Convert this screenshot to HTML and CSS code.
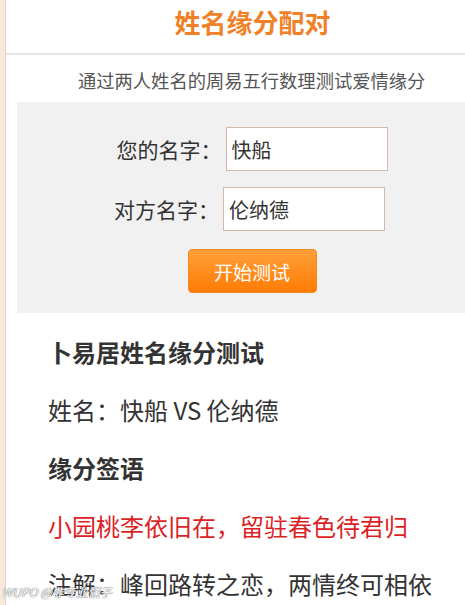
FILE: index.html
```html
<!DOCTYPE html>
<html lang="zh-CN">
<head>
  <meta charset="UTF-8" />
  <meta name="viewport" content="width=device-width, initial-scale=1.0"/>
  <title>姓名缘分配对</title>
  <link rel="stylesheet" href="styles.css">
</head>
<body>
  <div class="page">
    <div class="side-strip"></div>

    <div class="main">
      <div class="header">
        <h1 class="title">姓名缘分配对</h1>
      </div>

      <p class="intro">通过两人姓名的周易五行数理测试爱情缘分</p>

      <div class="test-form">
        <div class="form-row">
          <label for="myName">您的名字：</label>
          <input type="text" id="myName" value="快船" />
        </div>
        <div class="form-row row-shift">
          <label for="otherName">对方名字：</label>
          <input type="text" id="otherName" value="伦纳德" />
        </div>
        <button class="start-btn">开始测试</button>
      </div>

      <div class="result">
        <h2 class="result-title">卜易居姓名缘分测试</h2>
        <p>姓名：快船 VS 伦纳德</p>
        <h2 class="result-title">缘分签语</h2>
        <p class="sign">小园桃李依旧在，留驻春色待君归</p>
        <p>注解：峰回路转之恋，两情终可相依</p>
      </div>
    </div>
  </div>

  <div class="watermark">WUPO @非专业懂子</div>
</body>
</html>
```

FILE: styles.css
```css
body {
  margin: 0;
  font-family: "Noto Sans CJK SC", "Noto Sans", sans-serif;
  background: #fff;
  color: #333;
  overflow: hidden;
}

.page {
  display: flex;
  min-height: 605px;
}

.side-strip {
  width: 5px;
  background: #f6e9dc;
  border-right: 1px solid #e2d3c3;
  flex-shrink: 0;
}

.main {
  flex: 1;
}

.header {
  height: 53px;
  border-bottom: 2px solid #e6e3e0;
  text-align: center;
  padding-left: 34px;
}

.title {
  margin: 0;
  font-size: 26px;
  line-height: 43px;
  font-weight: bold;
  color: #ef8129;
}

.intro {
  margin: 11px 0 8px;
  padding-left: 72px;
  font-size: 18.3px;
  line-height: 28px;
  color: #555;
}

.test-form {
  margin-left: 11px;
  background: #f1f1f1;
  padding: 25px 0 20px 22px;
  display: flex;
  flex-direction: column;
  align-items: center;
  gap: 16px;
}

.form-row {
  display: flex;
  align-items: center;
  gap: 4px;
}

.row-shift {
  margin-right: 5px;
}

.form-row label {
  font-size: 21px;
  color: #333;
}

.form-row input {
  width: 162px;
  height: 44px;
  box-sizing: border-box;
  border: 1px solid #d3b8a9;
  background: #fff;
  padding: 0 5px;
  font-family: "Noto Sans CJK SC", sans-serif;
  font-size: 20px;
  color: #333;
  outline: none;
}

.start-btn {
  margin-top: 2px;
  width: 129px;
  height: 44px;
  border: 1px solid #f48a1c;
  border-radius: 4px;
  background: linear-gradient(#ffa03a, #ff7c05);
  color: #fff;
  font-family: "Noto Sans CJK SC", sans-serif;
  font-size: 19px;
  cursor: pointer;
}

.result {
  padding: 22px 0 0 42px;
  display: flex;
  flex-direction: column;
  gap: 24px;
}

.result p,
.result-title {
  margin: 0;
  font-size: 24px;
  line-height: 34px;
  color: #333;
}

.result-title {
  font-weight: bold;
}

.sign {
  color: #dc1f26 !important;
}

.watermark {
  position: absolute;
  left: 2px;
  bottom: 5px;
  font-size: 12px;
  color: #fff;
  text-shadow: 0 0 1px #666, 0 0 1px #666;
  font-style: italic;
}
```
